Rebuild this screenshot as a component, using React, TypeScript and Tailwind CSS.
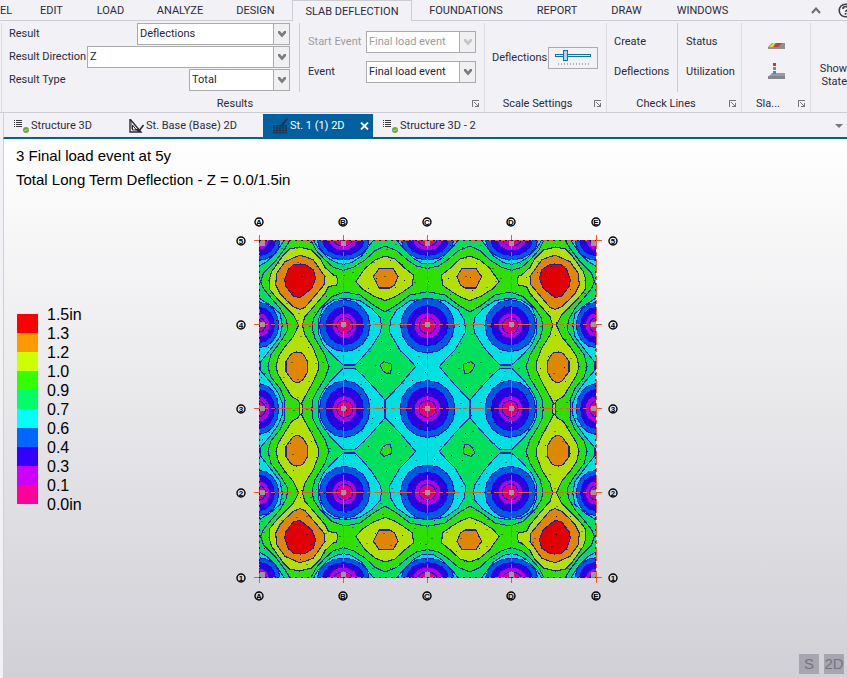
import { useState } from "react";
import type { ReactNode } from "react";

const MENU = [
  { label: "EL", width: "w-[23px] justify-start" },
  { label: "EDIT", width: "w-[57px] justify-center" },
  { label: "LOAD", width: "w-[61px] justify-center" },
  { label: "ANALYZE", width: "w-[78px] justify-center" },
  { label: "DESIGN", width: "w-[73px] justify-center" },
  { label: "SLAB DEFLECTION", width: "w-[120px] justify-center" },
  { label: "FOUNDATIONS", width: "w-[108px] justify-center" },
  { label: "REPORT", width: "w-[74px] justify-center" },
  { label: "DRAW", width: "w-[65px] justify-center" },
  { label: "WINDOWS", width: "w-[87px] justify-center" },
];

const LEGEND_COLORS = [
  "#ff0000",
  "#ff9900",
  "#ccff00",
  "#33ff00",
  "#00ff66",
  "#00ffff",
  "#0066ff",
  "#3300ff",
  "#cc00ff",
  "#ff0099",
];

const LEGEND_LABELS = ["1.5in", "1.3", "1.2", "1.0", "0.9", "0.7", "0.6", "0.4", "0.3", "0.1", "0.0in"];

interface SelectBoxProps {
  id: string;
  value: string;
  width: string;
  disabled?: boolean;
}

function SelectBox({ id, value, width, disabled }: SelectBoxProps) {
  return (
    <div className={`relative h-[22px] shrink-0 ${width}`}>
      <select
        id={id}
        disabled={disabled}
        defaultValue={value}
        className="h-full w-full appearance-none border border-[#ababab] bg-white pl-[2px] pr-5 text-[#26263a] outline-none disabled:text-[#9c9ca0] disabled:opacity-100"
      >
        <option>{value}</option>
      </select>
      <div className="pointer-events-none absolute inset-y-0 right-0 flex w-[17px] items-center justify-center border border-[#ababab] bg-[#f0f0f3]">
        <svg width="8" height="7" viewBox="0 0 8 7">
          <path d="M0 0h2l2 2.500L6 0h2v2L4 6.500 0 2z" fill={disabled ? "#c4c4c6" : "#7b7b7e"} />
        </svg>
      </div>
    </div>
  );
}

function Launcher() {
  return (
    <button aria-label="More options" className="flex h-2 w-2 items-center justify-center">
      <svg width="8" height="8" viewBox="0 0 8 8" shapeRendering="crispEdges">
        <path d="M0.500 7V0.500H7" stroke="#77777c" fill="none" />
        <path d="M2 2h1v1h1v1h1v1h1V3h1v4H3V6h2V5H4V4H3V3H2z" fill="#77777c" />
      </svg>
    </button>
  );
}

interface GroupProps {
  title: string;
  width: string;
  children: ReactNode;
}

function Group({ title, width, children }: GroupProps) {
  return (
    <section className={`flex shrink-0 flex-col border-r border-[#dcdce2] ${width}`}>
      <div className="mb-1 flex h-[69px]">{children}</div>
      <div className="flex h-4 items-center pr-1">
        <h2 className="flex-1 pr-1 text-center">{title}</h2>
        <Launcher />
      </div>
    </section>
  );
}

function ListIcon() {
  return (
    <svg width="15" height="14" viewBox="0 0 15 14" className="shrink-0">
      <path d="M0 1.500h1M2 1.500h6M0 3.500h1M2 3.500h6M0 5.500h1M2 5.500h6M0 7.500h1M2 7.500h6" stroke="#3a3a42" />
      <circle cx="12" cy="11" r="3" fill="#6ea834" />
      <path d="M10.500 11l1 1 2-2" stroke="#d9efbf" fill="none" strokeWidth="0.800" />
    </svg>
  );
}

function SquareIcon() {
  return (
    <svg width="15" height="14" viewBox="0 0 15 14" className="shrink-0">
      <path d="M1 0v13h11z" fill="none" stroke="#2b2b33" strokeWidth="1.400" />
      <path d="M3.500 6v5h4z" fill="none" stroke="#2b2b33" />
      <path d="M2 3h1M2 5h1M2 7h1M2 9h1" stroke="#2b2b33" />
      <path d="M14.500 6L10 12" stroke="#2b2b33" strokeWidth="1.600" />
      <path d="M6 10l3 3h2l-1-3z" fill="#2b2b33" />
    </svg>
  );
}

function SlabIcon() {
  return (
    <svg width="15" height="16" viewBox="0 0 15 16" className="shrink-0">
      <path d="M1 7.500h12M0 10h14M0 12.500h14M0 15h14M1 7v8M4 7v8M7 7v8M10 7v8M13 7v8" stroke="#26324a" strokeWidth="1.200" />
      <path d="M14 0l1 1-5 7-3 1 1-3z" fill="#26324a" />
    </svg>
  );
}

/* One quadrant of the slab, three units to the pixel. Mirrored to make the full contour map. */
const BANDS: { fill: string; paths: string[] }[] = [
  {
    fill: "#2de000",
    paths: [
      "M123 25L105 55 75 95 40 130 32 155 40 175 60 200 90 235 110 270 113 300 95 330 62 375 54 410 62 440 90 475 105 510 103 545H185L188 510 200 485 225 445 237 410 225 375 195 325 187 295 190 265 210 235 245 200 285 186 330 195 370 225 405 246 440 225 480 195 545 183V118L500 108 470 88 440 62 405 48 375 62 345 90 310 112 280 121 250 112 225 90 198 60 180 25z",
      "M390 405L402 395 425 403 422 430 412 431 400 424z",
    ],
  },
  {
    fill: "#b4e000",
    paths: [
      "M148 51L185 60 210 85 225 112 250 135 260 138 263 155 260 165 235 170 225 190 200 220 165 260 157 285 165 315 190 355 205 395 205 420 190 455 165 500 155 520 158 530 154 545H148L150 520 143 510 125 500 85 435 78 410 85 380 105 350 130 320 146 285 130 255 85 210 60 180 57 150 65 125 100 75 118 57z",
      "M318 155L345 115 375 90 405 78 435 87 465 115 490 135 488 165 460 185 432 202 405 212 370 198 335 175z",
    ],
  },
  {
    fill: "#e08700",
    paths: [
      "M148 76L165 80 190 90 210 118 225 140 222 165 190 203 165 232 150 238 130 230 105 207 90 190 77 165 80 130 105 95z",
      "M140 366L158 370 173 395 173 425 160 448 145 458 130 455 108 425 108 395 125 370z",
      "M387 116L430 116 444 140 434 165 420 174 387 174 378 155 370 140z",
    ],
  },
  { fill: "#e00000", paths: ["M150 102L165 103 190 120 197 145 185 175 160 195 148 203 130 198 108 170 104 150 115 118 130 105z"] },
  {
    fill: "#00e0e0",
    paths: [
      "M285 204L330 212 365 235 390 262 395 290 390 310 365 350 335 385 315 405H280L250 378 220 345 205 310V270L220 230 250 210z",
      "M545 203L480 212 440 240 422 270 418 305 450 360 475 385 497 410 450 465 407 510V545H403V508L370 470 340 438 315 415H280L240 455 215 490 205 515V545H545z",
      "M20 200L60 225 90 250 97 285 90 320 60 360 30 398V420L60 455 85 490 97 520V545H20z",
      "M20 112L50 95 80 65 106 25H20z",
      "M187 25L205 55 235 85 258 98 280 103 305 98 335 78 355 50 375 25z",
      "M436 25L460 55 490 85 515 100 545 103V25z",
    ],
  },
];

/* Rings round each column: centre and radii of the blue, indigo, magenta and pink bands. */
const COLUMN_RINGS = [
  { cx: 27, cy: 30, r: [[63, 61], [49, 47], [31, 29], [17, 17]] },
  { cx: 280, cy: 30, r: [[78, 60], [62, 46], [43, 32], [27, 18]] },
  { cx: 532, cy: 30, r: [[78, 60], [62, 46], [43, 32], [27, 18]] },
  { cx: 27, cy: 285, r: [[59, 68], [46, 53], [33, 37], [19, 22]] },
  { cx: 284, cy: 287, r: [[76, 78], [56, 57], [37, 38], [24, 24]] },
  { cx: 532, cy: 287, r: [[80, 82], [60, 60], [40, 39], [24, 24]] },
  { cx: 27, cy: 537, r: [[59, 76], [46, 58], [33, 39], [19, 23]] },
  { cx: 284, cy: 537, r: [[76, 85], [56, 65], [37, 40], [24, 25]] },
  { cx: 532, cy: 537, r: [[82, 85], [62, 65], [40, 40], [25, 25]] },
];

const RING_FILLS = ["#005ae0", "#2d00e0", "#b400e0", "#e0007f"];

const GRID_X = [259, 343, 427, 511, 596];
const GRID_Y = [240, 324, 408, 492, 577];

function ringPoints(cx: number, cy: number, rx: number, ry: number) {
  const points: string[] = [];
  for (let i = 0; i < 16; i++) {
    const a = (i * Math.PI) / 8;
    points.push(`${Math.round(cx + rx * Math.cos(a))},${Math.round(cy + ry * Math.sin(a))}`);
  }
  return points.join(" ");
}

function meshNodes() {
  const nodes: { x: number; y: number; dark: boolean }[] = [];
  let seed = 17;
  const next = () => {
    seed = (seed * 16807) % 2147483647;
    return seed / 2147483647;
  };
  for (let x = 260; x < 590; x += 15) {
    for (let y = 242; y < 572; y += 15) {
      nodes.push({
        x: x + Math.floor(next() * 12),
        y: y + Math.floor(next() * 12),
        dark: next() > 0.6,
      });
    }
  }
  return nodes;
}

const NODES = meshNodes();

function Quadrant() {
  return (
    <g transform="translate(250 230) scale(0.3333)" stroke="#1818d0" strokeWidth="3.300">
      <rect x="20" y="25" width="520" height="520" fill="#00e05a" stroke="none" />
      {BANDS.map((band) =>
        band.paths.map((d) => <path key={d} d={d} fill={band.fill} />)
      )}
      {COLUMN_RINGS.map((col) =>
        col.r.map(([rx, ry], i) => (
          <polygon
            key={`${col.cx}-${col.cy}-${i}`}
            points={ringPoints(col.cx, col.cy, rx, ry)}
            fill={RING_FILLS[i]}
            stroke={i === 1 ? "#0a0aff" : "#1818d0"}
          />
        ))
      )}
    </g>
  );
}

function Bubble({ x, y, label }: { x: number; y: number; label: string }) {
  return (
    <g>
      <circle cx={x} cy={y} r="4" fill="none" stroke="#000" strokeWidth="1.400" />
      <text x={x} y={y + 3} fontSize="8" fontWeight="bold" textAnchor="middle" fill="#000">
        {label}
      </text>
    </g>
  );
}

function ContourPlot() {
  return (
    <svg
      width="386"
      height="390"
      viewBox="235 214 386 390"
      role="img"
      aria-label="Slab deflection contours"
      className="font-['Liberation_Sans',sans-serif]"
    >
      <defs>
        <clipPath id="quadrant">
          <rect x="259" y="240" width="169" height="169" />
        </clipPath>
        <g id="quarter" clipPath="url(#quadrant)">
          <Quadrant />
        </g>
      </defs>
      <g shapeRendering="crispEdges">
        <use href="#quarter" />
        <use href="#quarter" transform="matrix(-1 0 0 1 855 0)" />
        <use href="#quarter" transform="matrix(1 0 0 -1 0 818)" />
        <use href="#quarter" transform="matrix(-1 0 0 -1 855 818)" />

        {NODES.map((n, i) => (
          <rect key={i} x={n.x} y={n.y} width={n.dark ? 1 : 2} height="1" fill="#000" fillOpacity={n.dark ? 0.85 : 0.4} />
        ))}

        {GRID_X.map((x) => (
          <path key={x} d={`M${x}.500 235V583`} stroke="#f0582a" strokeDasharray="14 3 4 3" fill="none" />
        ))}
        {GRID_Y.map((y) => (
          <path key={y} d={`M254 ${y}.500H602`} stroke="#f0582a" strokeDasharray="14 3 4 3" fill="none" />
        ))}
        <path d="M259 240.500H596M259 577.500H596M259.500 241V577M595.500 241V577" stroke="#301030" strokeDasharray="2 4" />

        {GRID_X.map((x) =>
          GRID_Y.map((y) => (
            <rect
              key={`${x}-${y}`}
              x={x === 596 ? 591 : x === 259 ? 260 : x - 2}
              y={y === 577 ? 572 : y === 240 ? 241 : y - 2}
              width="5"
              height="5"
              fill="#9898a0"
            />
          ))
        )}
      </g>
      {GRID_X.map((x, i) => (
        <g key={x}>
          <Bubble x={x} y={222} label={"ABCDE"[i]} />
          <Bubble x={x} y={596} label={"ABCDE"[i]} />
        </g>
      ))}
      {GRID_Y.map((y, i) => (
        <g key={y}>
          <Bubble x={241} y={y + 1} label={"54321"[i]} />
          <Bubble x={613} y={y + 1} label={"54321"[i]} />
        </g>
      ))}
    </svg>
  );
}

export default function App() {
  const [menu, setMenu] = useState("SLAB DEFLECTION");
  const [scale, setScale] = useState(24);

  return (
    <div className="flex min-h-screen flex-col overflow-hidden bg-[#f2f1f6] font-[Roboto,sans-serif] text-[11px] leading-4 text-[#2b2b40]">
      {/* Ribbon tabs */}
      <nav className="flex h-[21px]">
        {MENU.map((item) => (
          <button
            key={item.label}
            onClick={() => setMenu(item.label)}
            className={`flex shrink-0 items-center whitespace-nowrap pt-px ${item.width} ${
              menu === item.label
                ? "border-x border-t border-[#cdccd4]"
                : "border-b border-[#cdccd4]"
            }`}
          >
            {item.label}
          </button>
        ))}
        <div className="flex min-w-[101px] flex-1 items-center justify-end gap-[17px] border-b border-[#cdccd4]">
          <button aria-label="Collapse ribbon">
            <svg width="10" height="7" viewBox="0 0 10 7">
              <path d="M1 6l4-4.500L9 6" stroke="#6b6b72" strokeWidth="2" fill="none" />
            </svg>
          </button>
          <button aria-label="Help" className="-mr-[6px]">
            <svg width="15" height="15" viewBox="0 0 15 15">
              <circle cx="7.500" cy="7.500" r="6.300" fill="none" stroke="#3f3f46" strokeWidth="1.600" />
              <path d="M5 6q0-2.500 2.500-2.500T10 5.700q0 1-1.200 1.700-1.200.7-1.200 1.600M7.600 10v1.800" fill="none" stroke="#3f3f46" strokeWidth="1.700" />
            </svg>
          </button>
        </div>
      </nav>

      {/* Ribbon */}
      <div className="flex h-[92px] border-b border-[#cdccd4] pl-px pt-[2px]">
        <Group title="Results" width="w-[484px] border-l">
          <div className="flex w-[298px] flex-col gap-px border-r border-[#cdccd4] pl-[7px] pr-[9px]">
            <div className="flex items-center justify-between">
              <label htmlFor="result">Result</label>
              <SelectBox id="result" value="Deflections" width="w-[153px]" />
            </div>
            <div className="flex items-center justify-between">
              <label htmlFor="direction" className="whitespace-nowrap">Result Direction</label>
              <SelectBox id="direction" value="Z" width="w-[203px]" />
            </div>
            <div className="flex items-center justify-between">
              <label htmlFor="type">Result Type</label>
              <SelectBox id="type" value="Total" width="w-[101px]" />
            </div>
          </div>
          <div className="flex flex-1 flex-col gap-2 pl-2 pr-2 pt-2">
            <div className="flex items-center justify-between">
              <label htmlFor="start-event" className="whitespace-nowrap text-[#9c9ca0]">Start Event</label>
              <SelectBox id="start-event" value="Final load event" width="w-[110px]" disabled />
            </div>
            <div className="flex items-center justify-between">
              <label htmlFor="event">Event</label>
              <SelectBox id="event" value="Final load event" width="w-[110px]" />
            </div>
          </div>
        </Group>

        <Group title="Scale Settings" width="w-[122px]">
          <div className="flex flex-1 items-center justify-between pl-[7px] pr-2">
            <label htmlFor="scale">Deflections</label>
            <div className="flex h-[22px] w-[50px] flex-col items-center border border-[#ababab] pt-[2px]">
              <input
                id="scale"
                type="range"
                value={scale}
                onChange={(e) => setScale(Number(e.target.value))}
                className="h-3 w-9 appearance-none bg-transparent [&::-webkit-slider-runnable-track]:h-[3px] [&::-webkit-slider-runnable-track]:border [&::-webkit-slider-runnable-track]:border-[#0a72b8] [&::-webkit-slider-runnable-track]:bg-white [&::-webkit-slider-thumb]:-mt-[5px] [&::-webkit-slider-thumb]:h-[11px] [&::-webkit-slider-thumb]:w-[5px] [&::-webkit-slider-thumb]:appearance-none [&::-webkit-slider-thumb]:border [&::-webkit-slider-thumb]:border-[#0a72b8] [&::-webkit-slider-thumb]:bg-[#a9d3f0]"
              />
              <svg width="33" height="3" viewBox="0 0 33 3" className="mt-px" shapeRendering="crispEdges">
                <path d="M1 1h32" stroke="#b4b4b8" strokeWidth="2" strokeDasharray="1 2" />
              </svg>
            </div>
          </div>
        </Group>

        <Group title="Check Lines" width="w-[135px]">
          <div className="flex w-[71px] flex-col items-start gap-[14px] border-r border-[#cdccd4] pl-[7px] pt-[11px]">
            <button>Create</button>
            <button>Deflections</button>
          </div>
          <div className="flex flex-1 flex-col items-start gap-[14px] pl-2 pt-[11px]">
            <button>Status</button>
            <button>Utilization</button>
          </div>
        </Group>

        <Group title="Sla..." width="w-[69px]">
          <div className="flex flex-1 flex-col items-center gap-[14px] pt-[14px]">
            <button aria-label="Slab contours">
              <svg width="17" height="12" viewBox="0 0 17 12">
                <path d="M4 6h13v6H0v-2z" fill="#8f8f98" />
                <path d="M5 6h9l-4 4H1z" fill="#d93434" />
                <path d="M5 6h3L5 10H1z" fill="#e8dc28" />
                <path d="M8 6h2L8 8H6z" fill="#2f9a3f" />
              </svg>
            </button>
            <button aria-label="Slab reinforcement">
              <svg width="17" height="16" viewBox="0 0 17 16">
                <path d="M4 10h13v6H0v-2z" fill="#9a9aa3" />
                <path d="M0 13h17v3H0z" fill="#858590" />
                <path d="M5 0h3v3H5z" fill="#d92b3a" />
                <path d="M5 4h3v3H5z" fill="#6fa534" />
                <path d="M5 8h3v3H5z" fill="#1a9be0" />
              </svg>
            </button>
          </div>
        </Group>

        <button className="flex min-w-0 flex-1 flex-col items-end pt-[39px] leading-[13px]">
          <span>Show</span>
          <span>State</span>
        </button>
      </div>

      {/* Document tabs */}
      <div className="ml-[3px] flex h-[26px] items-stretch border-b-2 border-[#0060a0] border-l border-l-[#d0cfdc] pt-px">
        <button className="flex w-[112px] items-center gap-[2px] whitespace-nowrap pl-[10px]">
          <ListIcon />
          Structure 3D
        </button>
        <button className="flex w-[147px] items-center gap-[2px] whitespace-nowrap pl-[13px]">
          <SquareIcon />
          St. Base (Base) 2D
        </button>
        <div className="flex w-[110px] items-center whitespace-nowrap bg-[#0060a0] pl-[10px] pr-1 text-white">
          <button className="flex flex-1 items-center gap-[2px]">
            <SlabIcon />
            St. 1 (1) 2D
          </button>
          <button aria-label="Close tab">
            <svg width="9" height="8" viewBox="0 0 9 8">
              <path d="M1 0.500l7 7M8 0.500l-7 7" stroke="#fff" strokeWidth="1.800" />
            </svg>
          </button>
        </div>
        <button className="flex items-center gap-[2px] whitespace-nowrap pl-[10px]">
          <ListIcon />
          Structure 3D - 2
        </button>
        <button aria-label="Open documents" className="ml-auto flex items-center pr-1">
          <svg width="8" height="4" viewBox="0 0 8 4">
            <path d="M0 0h8L4 4z" fill="#77777c" />
          </svg>
        </button>
      </div>

      {/* Drawing canvas */}
      <main className="relative ml-[3px] flex-1 border-l border-[#d0cfdc] bg-linear-to-b from-white to-[#d1d0d6] pt-[5px] font-['Liberation_Sans',sans-serif] text-black">
        <div className="pl-3 text-[15px] leading-6">
          <p>3 Final load event at 5y</p>
          <p>Total Long Term Deflection - Z = 0.0/1.5in</p>
        </div>
        <div className="mt-[22px] grid grid-cols-[1fr_auto_1fr] pl-1">
          <div className="flex gap-[9px] pl-[9px] pt-[91px]">
            <div className="mt-[9px] w-[21px]">
              {LEGEND_COLORS.map((color) => (
                <div key={color} className="h-[19px]" style={{ backgroundColor: color }} />
              ))}
            </div>
            <ul className="text-[16px] leading-[19px]">
              {LEGEND_LABELS.map((label) => (
                <li key={label}>{label}</li>
              ))}
            </ul>
          </div>
          <ContourPlot />
        </div>
        <div className="absolute bottom-1 right-[3px] flex gap-[5px] text-[15px] text-[#757480]">
          <button className="h-5 w-5 bg-[#a6a5b0]">S</button>
          <button className="h-5 w-5 bg-[#a6a5b0]">2D</button>
        </div>
      </main>
    </div>
  );
}
